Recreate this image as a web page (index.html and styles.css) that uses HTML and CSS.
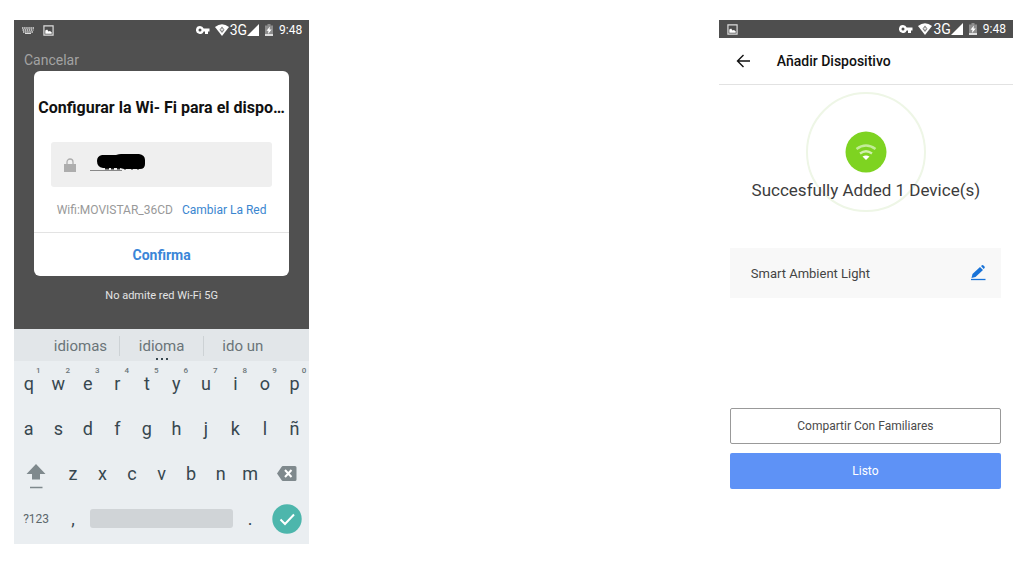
FILE: index.html
```html
<!DOCTYPE html>
<html lang="es">
<head>
    <meta charset="UTF-8">
    <meta name="viewport" content="width=device-width, initial-scale=1.0">
    <title>Añadir Dispositivo</title>
    <link rel="stylesheet" href="styles.css">
</head>
<body>
    <!-- Shared status bar icons -->
    <svg class="sprite" aria-hidden="true">
        <symbol id="picture" viewBox="0 0 12 12">
            <path d="M1 1h10v10H1z" fill="none" stroke="#ddd" stroke-width="1.3"/>
            <path d="M2.500 9.500V6l2-1 1.500 2 1.500-.5 2 1.500v1.500z" fill="#fff"/>
        </symbol>
        <symbol id="key" viewBox="0 0 14 8">
            <path d="M4 0a4 4 0 1 0 3.700 5.500H9V8h3V5.500h1.500v-3H7.700A4 4 0 0 0 4 0zm0 2.500a1.500 1.500 0 1 1 0 3 1.500 1.500 0 0 1 0-3z" fill="#fff" fill-rule="evenodd"/>
        </symbol>
        <symbol id="wifi-status" viewBox="0 0 14 12">
            <path d="M0 3Q7-2.500 14 3L7 12z" fill="#fff"/>
            <path d="M7 2.500l2.500 3.200L7 9 4.500 5.700z" fill="#777"/>
            <path d="M7 4.200v3M5.500 5.700h3" stroke="#fff" stroke-width=".8"/>
        </symbol>
        <symbol id="signal" viewBox="0 0 12 12">
            <path d="M12 0v12H0z" fill="#fff"/>
        </symbol>
        <symbol id="battery" viewBox="0 0 8 12">
            <path d="M0 1.500h2.500V0h3v1.500H8V12H0z" fill="#8d8d8d"/>
            <path d="M0 10h8v2H0z" fill="#ddd"/>
            <path d="M5 2.500L1.500 6.800h2L3 10l3.700-4.500H4.500z" fill="#fff"/>
        </symbol>
    </svg>

    <main class="screens">
        <section class="phone">
            <div class="status-bar">
                <svg class="keyboard-icon" viewBox="0 0 12 7" aria-hidden="true">
                    <path d="M0 1h12M.5 3h11M1 5h10" stroke="#ddd" stroke-width="1.500" stroke-dasharray="1.500 .6"/>
                    <path d="M3 6.500h6" stroke="#ddd"/>
                </svg>
                <svg class="picture-icon"><use href="#picture"/></svg>
                <span class="status-right">
                    <svg class="key-icon"><use href="#key"/></svg>
                    <svg class="wifi-icon"><use href="#wifi-status"/></svg>
                    <span class="network">3G</span>
                    <svg class="signal-icon"><use href="#signal"/></svg>
                    <svg class="battery-icon"><use href="#battery"/></svg>
                    <span class="clock">9:48</span>
                </span>
            </div>

            <div class="setup">
                <button class="cancel" type="button">Cancelar</button>
                <form class="dialog">
                    <h1>Configurar la Wi- Fi para el dispo…</h1>
                    <div class="password">
                        <svg class="lock-icon" viewBox="0 0 12 14" aria-hidden="true">
                            <path d="M3 7V4a3 3 0 0 1 6 0v3" fill="none" stroke="#adadad" stroke-width="1.300"/>
                            <path d="M0 6h12v8H0z" fill="#adadad"/>
                        </svg>
                        <input type="text" aria-label="Contraseña Wi-Fi">
                        <svg class="redacted" viewBox="0 0 56 20" aria-hidden="true">
                            <path d="M0 17.500h32" stroke="#888"/>
                            <path d="M15 15.500h4m2 0h3m3 0h3m4 0h2m5 0h2m4 0h2" stroke="#222" stroke-width="2"/>
                            <path d="M12 2h14q3-1 5-1h18q6 1 6 6v4q0 5-5 5H34l-4-1H13q-6-1-6-7 0-5 5-6z" fill="#000"/>
                        </svg>
                    </div>
                    <p class="wifi-name">Wifi:MOVISTAR_36CD <a href="#">Cambiar La Red</a></p>
                    <button class="confirm" type="button">Confirma</button>
                </form>
                <p class="note">No admite red Wi-Fi 5G</p>
            </div>

            <div class="keyboard">
                <div class="suggestions">
                    <button type="button">idiomas</button>
                    <button type="button" class="best">idioma</button>
                    <button type="button">ido un</button>
                </div>
                <div class="keys">
                    <button type="button">q<sup>1</sup></button>
                    <button type="button">w<sup>2</sup></button>
                    <button type="button">e<sup>3</sup></button>
                    <button type="button">r<sup>4</sup></button>
                    <button type="button">t<sup>5</sup></button>
                    <button type="button">y<sup>6</sup></button>
                    <button type="button">u<sup>7</sup></button>
                    <button type="button">i<sup>8</sup></button>
                    <button type="button">o<sup>9</sup></button>
                    <button type="button">p<sup>0</sup></button>
                </div>
                <div class="keys">
                    <button type="button">a</button>
                    <button type="button">s</button>
                    <button type="button">d</button>
                    <button type="button">f</button>
                    <button type="button">g</button>
                    <button type="button">h</button>
                    <button type="button">j</button>
                    <button type="button">k</button>
                    <button type="button">l</button>
                    <button type="button">ñ</button>
                </div>
                <div class="keys letters">
                    <button type="button" class="shift" aria-label="Mayúsculas">
                        <svg viewBox="0 0 20 26"><path d="M10 1l9.500 10H14v5.500H6V11H.5z" fill="#7f898d"/><path d="M4 24.500h12.500" stroke="#7f898d" stroke-width="1.500"/></svg>
                    </button>
                    <button type="button">z</button>
                    <button type="button">x</button>
                    <button type="button">c</button>
                    <button type="button">v</button>
                    <button type="button">b</button>
                    <button type="button">n</button>
                    <button type="button">m</button>
                    <button type="button" class="delete" aria-label="Borrar">
                        <svg viewBox="0 0 20 15"><path d="M6 0h12q1.500 0 1.500 1.500v12q0 1.500-1.500 1.500H6q-1 0-1.500-1L0 7.500 4.500 1Q5 0 6 0z" fill="#7f898d"/><path d="M8 4l6.500 7m0-7L8 11" stroke="#fff" stroke-width="2"/></svg>
                    </button>
                </div>
                <div class="keys bottom">
                    <button type="button" class="symbols">?123</button>
                    <button type="button">,</button>
                    <button type="button" class="space" aria-label="Espacio"></button>
                    <button type="button">.</button>
                    <button type="button" class="enter" aria-label="Aceptar">
                        <svg viewBox="0 0 30 30"><circle cx="15" cy="15" r="14.700" fill="#4db6ac"/><path d="M8.500 15.500l4.500 4.500L22 10.500" fill="none" stroke="#fff" stroke-width="2"/></svg>
                    </button>
                </div>
            </div>
        </section>

        <section class="phone phone-done">
            <div class="status-bar">
                <svg class="picture-icon"><use href="#picture"/></svg>
                <span class="status-right">
                    <svg class="key-icon"><use href="#key"/></svg>
                    <svg class="wifi-icon"><use href="#wifi-status"/></svg>
                    <span class="network">3G</span>
                    <svg class="signal-icon"><use href="#signal"/></svg>
                    <svg class="battery-icon"><use href="#battery"/></svg>
                    <span class="clock">9:48</span>
                </span>
            </div>

            <header class="app-header">
                <button type="button" aria-label="Volver">
                    <svg viewBox="0 0 14 14"><path d="M7.500 1L1.500 7l6 6M1.500 7H14" fill="none" stroke="#111" stroke-width="1.400"/></svg>
                </button>
                <h2>Añadir Dispositivo</h2>
            </header>

            <div class="result">
                <svg class="success-icon" viewBox="0 0 120 120" aria-hidden="true">
                    <circle cx="60" cy="60" r="59" fill="none" stroke="#eef6e6" stroke-width="2"/>
                    <circle cx="60" cy="60" r="20.500" fill="#7ed321"/>
                    <path d="M50.500 57q9.500-7 19 0" fill="none" stroke="#c3ec98" stroke-width="2.500"/>
                    <path d="M54 61.500q6-4.500 12 0" fill="none" stroke="#d0f0ad" stroke-width="2.300"/>
                    <path d="M56.500 64.500q3.500-2 7 0L60 68z" fill="#fff"/>
                </svg>
                <p>Succesfully Added 1 Device(s)</p>
            </div>

            <div class="device">
                <span>Smart Ambient Light</span>
                <button type="button" aria-label="Editar nombre">
                    <svg viewBox="0 0 16 16"><path d="M1.500 13l1-4L10 2l3 3-7.500 7z" fill="#1873d8"/><path d="M11 1l1-.7q.8-.5 1.500.2l1 1q.7.800 0 1.500l-.8 1z" fill="#1873d8"/><path d="M1 14.500h14.500" stroke="#1873d8" stroke-width="1.300"/></svg>
                </button>
            </div>

            <div class="actions">
                <button type="button" class="share">Compartir Con Familiares</button>
                <button type="button" class="done">Listo</button>
            </div>
        </section>
    </main>
</body>
</html>
```
FILE: styles.css
```css
* {
    box-sizing: border-box;
}

body {
    margin: 0;
    padding: 20px 14px;
    font-family: Roboto, sans-serif;
    background: #fff;
}

h1, h2, p {
    margin: 0;
}

button {
    padding: 0;
    border: none;
    background: none;
    font-family: inherit;
    cursor: pointer;
}

svg {
    display: block;
    flex-shrink: 0;
}

.sprite {
    display: none;
}

.screens {
    display: grid;
    grid-template-columns: minmax(0, 295fr) minmax(0, 294fr);
    column-gap: 41%;
    align-items: start;
}

/* Status bar */
.status-bar {
    display: flex;
    align-items: center;
    gap: 9px;
    height: 20px;
    padding: 0 7px 0 8px;
    background: #4e4e4e;
    color: #fff;
}

.phone-done .status-bar {
    height: 18px;
}

.status-right {
    display: flex;
    align-items: center;
    margin-left: auto;
}

.keyboard-icon {
    width: 12px;
    height: 7px;
}

.picture-icon {
    width: 11px;
    height: 11px;
}

.key-icon {
    width: 14px;
    height: 8px;
}

.wifi-icon {
    width: 14px;
    height: 12px;
    margin-left: 5px;
}

.network {
    margin-left: 1px;
    font-size: 14px;
}

.signal-icon {
    width: 12px;
    height: 12px;
}

.battery-icon {
    width: 8px;
    height: 12px;
    margin-left: 6px;
}

.clock {
    margin-left: 6px;
    font-size: 12px;
}

/* Wi-Fi setup */
.setup {
    height: 289px;
    padding: 8px 20px 0;
    background: #505050;
}

.cancel {
    display: block;
    height: 23px;
    margin-left: -10px;
    font-size: 14px;
    color: #a3a3a3;
}

.dialog {
    border-radius: 6px;
    background: #fff;
    text-align: center;
}

.dialog h1 {
    display: flex;
    justify-content: center;
    padding-top: 26px;
    font-size: 16px;
    font-weight: 700;
    line-height: 22px;
    white-space: nowrap;
    color: #111;
}

.password {
    position: relative;
    display: flex;
    align-items: center;
    height: 45px;
    margin: 23px 17px 0;
    padding-left: 13px;
    border-radius: 3px;
    background: #efefef;
}

.lock-icon {
    width: 12px;
    height: 14px;
}

.password input {
    flex: 1;
    min-width: 0;
    height: 45px;
    padding: 0 14px;
    border: none;
    outline: none;
    background: none;
    font: inherit;
}

.redacted {
    position: absolute;
    left: 39px;
    top: 11px;
    width: 56px;
    height: 20px;
}

.wifi-name {
    padding: 13px 0 12px;
    font-size: 12px;
    line-height: 20px;
    white-space: nowrap;
    color: #999;
}

.wifi-name a {
    margin-left: 6px;
    color: #3a86d0;
    text-decoration: none;
}

.confirm {
    display: block;
    width: 100%;
    height: 44px;
    border-top: 1px solid #e3e3e3;
    font-size: 14px;
    font-weight: 700;
    color: #3a86d8;
}

.note {
    padding-top: 12px;
    font-size: 11px;
    line-height: 16px;
    text-align: center;
    color: #e4e4e4;
}

/* Keyboard */
.keyboard {
    padding-bottom: 3px;
    background: #eaeef1;
}

.suggestions {
    display: grid;
    grid-template-columns: 9fr 10fr 9fr;
    align-items: center;
    height: 32px;
    padding: 2px 28px 0;
    background: #e2e6e9;
}

.suggestions button {
    height: 20px;
    font-size: 15px;
    color: #6a7478;
}

.suggestions .best {
    position: relative;
    border-left: 1px solid #cdd2d5;
    border-right: 1px solid #cdd2d5;
}

.best::after {
    content: "";
    position: absolute;
    left: calc(50% - 6px);
    bottom: -4px;
    width: 12px;
    height: 2px;
    background: repeating-linear-gradient(to right, #37474f 0 2px, transparent 2px 5px);
}

.keys {
    display: grid;
    grid-template-columns: repeat(10, 1fr);
    height: 45px;
}

.keys.letters {
    grid-template-columns: 3fr repeat(7, 2fr) 3fr;
}

.keys.bottom {
    grid-template-columns: 3fr 2fr 10fr 2fr 3fr;
    align-items: center;
}

.keys button {
    position: relative;
    font-size: 18px;
    color: #37474f;
}

.keys sup {
    position: absolute;
    top: 5px;
    right: 3px;
    font-size: 8px;
    font-weight: 500;
    line-height: 10px;
    color: #6a7478;
}

.shift svg {
    width: 20px;
    height: 26px;
    margin: 4px auto 0;
}

.delete svg {
    width: 20px;
    height: 15px;
    margin: auto;
}

.keys .symbols {
    font-size: 12px;
    color: #5c676c;
}

.keys .space {
    height: 19px;
    margin: 0 2px;
    border-radius: 3px;
    background: #d0d4d7;
}

.enter svg {
    width: 30px;
    height: 30px;
    margin: auto;
}

/* Device added */
.app-header {
    display: flex;
    align-items: center;
    gap: 27px;
    height: 47px;
    padding-left: 17px;
    border-bottom: 1px solid #e2e2e2;
}

.app-header svg {
    width: 14px;
    height: 14px;
}

.app-header h2 {
    font-size: 14px;
    font-weight: 500;
    color: #111;
}

.result {
    position: relative;
    height: 163px;
    padding-top: 94px;
    text-align: center;
}

.result p {
    position: relative;
    font-size: 17px;
    line-height: 22px;
    white-space: nowrap;
    color: #3c3c3c;
}

.success-icon {
    position: absolute;
    top: 7px;
    left: calc(50% - 60px);
    width: 120px;
    height: 120px;
}

.device {
    display: flex;
    align-items: center;
    justify-content: space-between;
    height: 50px;
    margin: 0 12px 0 11px;
    padding: 0 15px 0 21px;
    background: #f8f8f8;
    font-size: 13px;
    color: #444;
}

.device svg {
    width: 16px;
    height: 16px;
}

.actions {
    display: grid;
    gap: 9px;
    margin: 110px 12px 0 11px;
}

.actions button {
    height: 36px;
    border-radius: 2px;
    font-size: 12px;
}

.share {
    border: 1px solid #999;
    color: #4a4a4a;
}

.done {
    background: #5e92f6;
    color: #fff;
}
```
